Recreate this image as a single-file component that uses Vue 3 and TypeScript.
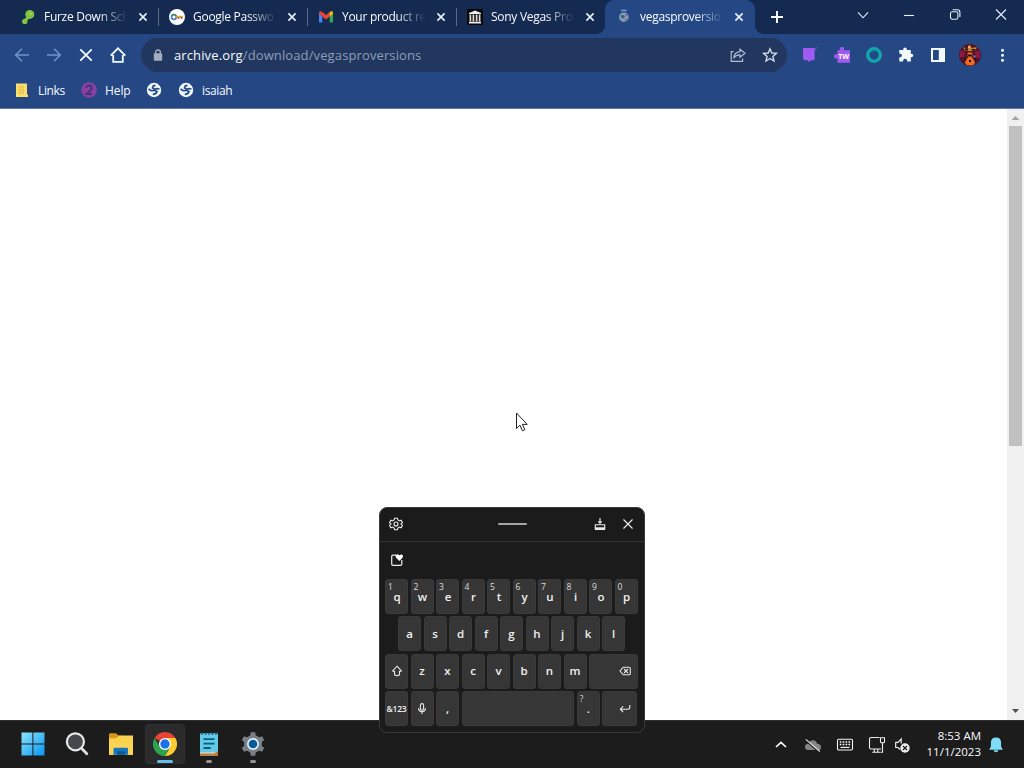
<script setup lang="ts">
interface Tab {
  icon: string
  title: string
  active?: boolean
}
interface Key {
  label?: string
  hint?: string
  kind?: string
}

const tabs: Tab[] = [
  { icon: 'leaf', title: 'Furze Down Sch' },
  { icon: 'key', title: 'Google Passwo' },
  { icon: 'mail', title: 'Your product re' },
  { icon: 'archive', title: 'Sony Vegas Pro' },
  { icon: 'globe', title: 'vegasproversio', active: true },
]

const letters = (s: string): Key[] => s.split('').map((label) => ({ label }))

const rows: Key[][] = [
  'qwertyuiop'.split('').map((label, i) => ({ label, hint: String((i + 1) % 10) })),
  letters('asdfghjkl'),
  [{ kind: 'shift' }, ...letters('zxcvbnm'), { kind: 'back' }],
  [
    { label: '&123', kind: 'sym' },
    { kind: 'mic' },
    { label: ',' },
    { kind: 'space' },
    { label: '.', hint: '?' },
    { kind: 'enter' },
  ],
]
</script>

<template>
  <div class="screen">
    <header class="tabstrip">
      <div v-for="tab in tabs" :key="tab.title" class="tab" :class="{ active: tab.active }">
        <span class="fav">
          <svg v-if="tab.icon === 'leaf'" viewBox="0 0 16 16">
            <circle cx="9.8" cy="5.4" r="4.5" fill="#82c341" />
            <circle cx="4.8" cy="12.4" r="2.7" fill="#82c341" />
            <path d="M9.5 7 L4.8 12" stroke="#82c341" stroke-width="3" />
            <circle cx="10.5" cy="5" r="1.2" fill="#a5d765" />
          </svg>
          <svg v-else-if="tab.icon === 'key'" viewBox="0 0 16 16">
            <circle cx="8" cy="8" r="8" fill="#fff" />
            <circle cx="4.9" cy="8" r="2.4" fill="none" stroke="#4b7fc9" stroke-width="1.6" />
            <path d="M2.8 6.8 A2.4 2.4 0 0 1 7 6.8" fill="none" stroke="#4d9561" stroke-width="1.6" />
            <path d="M7.3 7.8 H14" stroke="#d9a63a" stroke-width="2" />
            <path d="M9.5 8 V10 M12.5 8 V10" stroke="#b9683d" stroke-width="1.6" />
          </svg>
          <svg v-else-if="tab.icon === 'mail'" viewBox="0 0 16 16">
            <path d="M1 4 V13.5 H4.3 V7.5 L1 4Z" fill="#4285f4" />
            <path d="M15 4 V13.5 H11.7 V7.5 L15 4Z" fill="#34a853" />
            <path d="M1 4.5 V3.6 C1 2 2.8 1.8 3.8 2.7 L8 6 L12 2.8 V7.3 L8 10.4 L4.2 7.4Z" fill="#ea4335" />
            <path d="M11.7 3 C13 1.9 15 2 15 3.8 V5 L11.7 7.6Z" fill="#fbbc04" />
          </svg>
          <svg v-else-if="tab.icon === 'archive'" viewBox="0 0 16 16">
            <rect width="16" height="16" rx="1" fill="#080808" />
            <path d="M2 4 L8 1.5 L14 4 V5 H2Z M2 12.8 H14 V14.5 H2Z" fill="#eee" />
            <path d="M3.4 5.5 V12.5 M6.4 5.5 V12.5 M9.6 5.5 V12.5 M12.6 5.5 V12.5" stroke="#ddd" stroke-width="1.7" />
          </svg>
          <svg v-else viewBox="0 0 16 16">
            <path d="M5 1.5H10.5" fill="none" stroke="#6d9ae0" stroke-width="1.6" />
            <circle cx="7.8" cy="8.2" r="4.8" fill="#8999b0" />
            <path d="M4.5 6.5 L7.5 6 L9 8 L7 9.8 L5.3 8.5Z M8.7 11 L11 9.3 L10.2 11.8Z M9 4.8 L11.4 6.6 L10 7.2Z" fill="#3c5b8c" />
          </svg>
        </span>
        <span class="title">{{ tab.title }}</span>
        <svg class="close" viewBox="0 0 10 10"><path d="M1.4 1.4 8.6 8.6M8.6 1.4 1.4 8.6" /></svg>
      </div>
      <svg class="newtab" viewBox="0 0 14 14"><path d="M7 1V13M1 7H13" /></svg>
      <div class="caption">
        <svg viewBox="0 0 14 14"><path d="M2 4.4 7 9.8 12 4.4" /></svg>
        <svg viewBox="0 0 14 14"><path d="M2 7.5H12" /></svg>
        <svg viewBox="0 0 14 14"><rect x="2.5" y="3.8" width="7.4" height="7.4" rx="1.6" /><path d="M4.6 1.8H9.3Q11.9 1.8 11.9 4.4V8.9" /></svg>
        <svg viewBox="0 0 14 14"><path d="M2 1.5 12 11.5M12 1.5 2 11.5" /></svg>
      </div>
    </header>

    <section class="chrome">
      <div class="toolbar">
        <svg class="nav dim" viewBox="0 0 16 16"><path d="M15 8H2M8 1.7 1.7 8 8 14.3" /></svg>
        <svg class="nav dim" viewBox="0 0 16 16"><path d="M1 8H14M8 1.7 14.3 8 8 14.3" /></svg>
        <svg class="nav" viewBox="0 0 16 16"><path d="M2.3 2.3 13.7 13.7M13.7 2.3 2.3 13.7" /></svg>
        <svg class="nav" viewBox="0 0 16 16"><path d="M3.2 8V14.8H12.8V8M.7 8.7 8 1.3 15.3 8.7" /></svg>
        <div class="omnibox">
          <svg class="lock" viewBox="0 0 10 13"><rect x=".8" y="4.3" width="8.4" height="7.4" rx=".8" fill="#a4adbd" /><path d="M2.7 4.5V3.1Q2.7 1 5 1T7.3 3.1V4.5" fill="none" stroke="#a4adbd" stroke-width="1.4" /></svg>
          <span class="url"><b>archive.org</b>/download/vegasproversions</span>
          <svg class="share" viewBox="0 0 16 16"><path d="M3.6 4.6H1.2V14.3H12.6V11.6M10 2.2 15 6.2 10 10.2V7.9Q6 7.7 3.7 11.3 4.2 5.3 10 4.7Z" /></svg>
          <svg class="star" viewBox="0 0 16 16"><path d="M8 1.7 9.8 6 14.4 6.4 10.9 9.4 12 14 8 11.5 4 14 5.1 9.4 1.6 6.4 6.2 6Z" /></svg>
        </div>
        <div class="extensions">
          <svg viewBox="0 0 18 18"><path d="M2 3Q2 2 3 2H13.6V13.2Q13.6 14.2 12.6 14.2H9.8L8.2 15.9 6.6 14.2H4.4Q2 14.2 2 12Z" fill="#9d5bf2" /><path d="M13.2 2 17 1 13.8 5Z" fill="#7050b8" /></svg>
          <svg viewBox="0 0 18 18"><path d="M4.5 4.2H7.2Q5.7.9 9 .9T10.6 4.2H17V16.8H4.5V12.2Q1 13.5 1 10.3T4.5 8.8Z" fill="#a35af3" /><text x="5.2" y="12.8">TW</text></svg>
          <svg viewBox="0 0 18 18"><circle cx="9" cy="9" r="6.3" fill="none" stroke="#11a8ac" stroke-width="3.3" /><path d="M6.3 6.3 Q9.5 3.8 12.7 5.8" fill="none" stroke="#0a7f98" stroke-width="1.3" /></svg>
          <svg viewBox="0 0 18 18"><path d="M2.3 4H6.2Q5.9 1.5 8 1.5T9.9 4H13.8V7.7Q16.3 7.4 16.3 9.4T13.8 11.2V15.5H10.2Q10.2 12.8 8.1 12.8T6 15.5H2.3V11.6Q5 11.6 5 9.6T2.3 7.6Z" fill="#f4fbff" /></svg>
          <svg viewBox="0 0 18 18"><rect x="3" y="3" width="12" height="12" fill="none" stroke="#f4fbff" stroke-width="2" /><rect x="9.8" y="3" width="5.2" height="12" fill="#f4fbff" /></svg>
          <svg class="avatar" viewBox="0 0 22 22">
            <circle cx="11" cy="11" r="11" fill="#521426" />
            <path d="M1.5 6 L6 8 L5 13 L.5 13Z M16 8 L20.5 6 L21.5 14 L17 14Z" fill="#8b1845" />
            <path d="M4 3 L8 5 L10.5 .5 L13 4 L18 3 L16.5 6 L12 7 L6 7Z" fill="#c9832c" />
            <path d="M6 4.5H9V6.5H6ZM12 5H17L14 7Z" fill="#2a121d" />
            <path d="M9 8.5H13L14 11 12.5 13 16 17Q16 20 14 21.3H8Q5 19 6.5 16L9.5 13 8 11Z" fill="#ee6c21" />
            <path d="M8 10.5H14L12.5 12.5H9.5ZM5 15 8 14 6 18ZM14 14 17 15 16 18ZM10 16H12V18H10Z" fill="#26111a" />
            <circle cx="10" cy="3" r="1" fill="#f5cf72" /><circle cx="15.5" cy="12.5" r="1.2" fill="#7a5fc5" />
          </svg>
          <svg viewBox="0 0 18 18"><g fill="#f4fbff"><circle cx="9.5" cy="4.3" r="1.5" /><circle cx="9.5" cy="9.3" r="1.5" /><circle cx="9.5" cy="14.3" r="1.5" /></g></svg>
        </div>
      </div>
      <nav class="bookmarks">
        <div class="bm links"><svg viewBox="0 0 16 16"><path d="M2 1.5H13V12L14 13V15H2Z" fill="#fbdf6c" /><path d="M4 5H10M4 8H10M4 11H10M6 4V12M9 4V12" stroke="#ddb445" stroke-width=".7" /></svg>Links</div>
        <div class="bm help"><svg viewBox="0 0 16 16"><circle cx="8" cy="8" r="7.8" fill="#8a3fa5" /><path d="M5 5.8Q5.5 3.5 8 3.5T10.8 6Q10.8 7.5 5.5 12H11.2" fill="none" stroke="#413577" stroke-width="1.8" /></svg>Help</div>
        <div v-for="name in ['', 'isaiah']" :key="name" class="bm earth">
          <svg viewBox="0 0 16 16"><circle cx="8" cy="8" r="7.2" fill="#f5fbff" /><path d="M2.6 7Q5.5 9.5 7.5 8.4T6.5 6Q6.5 3.6 9.5 3.3M13.5 7Q10 6.3 9 7.3T11 9.5Q10.3 12.3 6.8 12.3" fill="none" stroke="#264a86" stroke-width="1.7" /></svg>{{ name }}
        </div>
      </nav>
    </section>

    <main class="page">
      <div class="scrollbar">
        <svg viewBox="0 0 17 17"><path d="M4.5 11 8.5 7 12.5 11Z" fill="#a3a3a3" /></svg>
        <div class="thumb"></div>
        <svg class="down" viewBox="0 0 17 17"><path d="M5 6 H12 L8.5 10Z" fill="#505050" /></svg>
      </div>
    </main>

    <footer class="taskbar">
      <div class="apps">
        <div class="app">
          <svg viewBox="0 0 26 26"><defs><linearGradient id="win" x1="0" y1="0" x2="1" y2="1"><stop stop-color="#8be4ff" /><stop offset="1" stop-color="#0795ef" /></linearGradient></defs><path d="M1.5 1.5H12.4V12.4H1.5ZM13.4 1.5H24.5V12.4H13.4ZM1.5 13.4H12.4V24.5H1.5ZM13.4 13.4H24.5V24.5H13.4Z" fill="url(#win)" /></svg>
        </div>
        <div class="app">
          <svg viewBox="0 0 26 26"><circle cx="11.4" cy="10.8" r="8.5" fill="#45474a" stroke="#e9e9e9" stroke-width="2.2" /><path d="M17.5 17.2 22.8 22.7" stroke="#dedede" stroke-width="2.8" stroke-linecap="round" /></svg>
        </div>
        <div class="app">
          <svg viewBox="0 0 26 26"><path d="M1 3.3Q1 2.2 2.2 2.2H8L10.8 4.7H14V10H1Z" fill="#d99716" /><path d="M1 7.3H8L11 4.5H25V23.8H1Z" fill="#fbd14f" /><path d="M1 12H25V23.8H1Z" fill="#fdd556" /><path d="M5.5 18Q5.5 16.8 6.8 16.8H18.8Q20 16.8 20 18V23.8H5.5Z" fill="#1578bf" /><path d="M9 20.2H17V23.8H9Z" fill="#105893" /></svg>
        </div>
        <div class="app selected">
          <svg viewBox="0 0 26 26"><path d="M13 13 2.6 7A12 12 0 0 1 23.4 7Z" fill="#e94335" /><path d="M13 7H23.4A12 12 0 0 1 13 25L18.2 16Z" fill="#ffcc2e" /><path d="M2.6 7 7.8 16 13 19 18.2 16 13 25A12 12 0 0 1 2.6 7Z" fill="#2da44e" /><circle cx="13" cy="13" r="6.1" fill="#fff" /><circle cx="13" cy="13" r="4.7" fill="#1a73e8" /></svg>
          <i class="run wide"></i>
        </div>
        <div class="app">
          <svg viewBox="0 0 26 26"><rect x="4" y="2.2" width="18" height="22" rx="1" fill="#62c9e8" /><path d="M4 21.5H22V24.5H4Z" fill="#eee4d8" /><path d="M4 22.6H18L22 20V24.5H4Z" fill="#c67729" /><path d="M7.5 8.2H18.5M7.5 12.7H18.5M7.5 17H14.7" stroke="#075c80" stroke-width="1.8" /><path d="M6 1.4V4M9.5 1.4V4M13 1.4V4M16.5 1.4V4M20 1.4V4" stroke="#165b72" stroke-width="1.2" /></svg>
          <i class="run"></i>
        </div>
        <div class="app">
          <svg viewBox="0 0 26 26"><g fill="#798087"><circle cx="13" cy="13" r="9" /><path id="tooth" d="M10.2 5 10.8 1.3H15.2L15.8 5V21L15.2 24.7H10.8L10.2 21Z" /><use href="#tooth" transform="rotate(60 13 13)" /><use href="#tooth" transform="rotate(120 13 13)" /></g><circle cx="13" cy="13" r="6" fill="#e2edf3" /><circle cx="13" cy="13" r="4.3" fill="#075b9b" /></svg>
          <i class="run"></i>
        </div>
      </div>
      <div class="tray">
        <svg class="chev" viewBox="0 0 18 18"><path d="M4 11 9 6.3 14 11" fill="none" stroke="#fff" stroke-width="1.6" /></svg>
        <svg class="cloud" viewBox="0 0 18 18"><path d="M4.5 14Q1 14 1 11T4.4 7.7Q5.5 4.2 9 4.2T13 7.8Q17 8.2 17 11.2T14 14Z" fill="#858585" /><path d="M1.8 4.5 14.8 15.9" stroke="#1c1c1c" stroke-width="1.6" /><path d="M1.8 3.3 15.8 15.5" stroke="#e5e5e5" stroke-width="1.1" /></svg>
        <svg class="kb" viewBox="0 0 18 18"><rect x="1.5" y="3.2" width="15" height="10.8" rx="1.2" fill="none" stroke="#f3f3f3" stroke-width="1.1" /><path d="M3.8 6H14.6M3.8 8.6H14.6" stroke="#fff" stroke-width="1.5" stroke-dasharray="1.6 1.3" /><path d="M4.5 11.4H13.5" stroke="#fff" stroke-width="1.1" /></svg>
        <svg class="net" viewBox="0 0 18 18"><path d="M11.5 1.5H3Q1.5 1.5 1.5 3V11.5Q1.5 13 3 13H13M6.3 13V16M9.8 13V16M4.3 16.3H12M12.5 1.7H16.5V5.7Q16.5 6.7 15.4 6.7H13.6Q12.5 6.7 12.5 5.7ZM14.5 6.7V16.3H12.3" fill="none" stroke="#eee" stroke-width="1.1" /></svg>
        <svg class="sound" viewBox="0 0 18 18"><path d="M6 13.5 4 11.5H1.7V6.3H4L7.2 3V7.5" fill="none" stroke="#eee" stroke-width="1.2" /><circle cx="11" cy="12" r="4.7" fill="#eee" /><path d="M9 10 13 14M13 10 9 14" stroke="#1c1c1c" stroke-width="1.2" /></svg>
        <div class="clock"><span>8:53 AM</span><span>11/1/2023</span></div>
        <svg class="bell" viewBox="0 0 18 18"><path d="M9 1.6Q3.9 1.6 3.9 7V10.5L2.2 13.7H15.8L14.1 10.5V7Q14.1 1.6 9 1.6ZM6.6 14.3Q7 16.2 9 16.2T11.4 14.3Z" fill="#7edcf8" /></svg>
      </div>
    </footer>

    <div class="keyboard">
      <div class="kbhead">
        <svg viewBox="0 0 14 14"><path d="M5.6 1.2H8.4L8.9 3 10.5 3.9 12.2 3.3 13.4 5.6 12 7 13.4 8.4 12.2 10.7 10.5 10.1 8.9 11 8.4 12.8H5.6L5.1 11 3.5 10.1 1.8 10.7.6 8.4 2 7 .6 5.6 1.8 3.3 3.5 3.9 5.1 3Z" /><circle cx="7" cy="7" r="2" /></svg>
        <i class="grip"></i>
        <svg class="dock" viewBox="0 0 14 14"><path d="M7 1V6M5.2 4.3 7 6.2 8.8 4.3M2.3 11V7.8H11.7V11" /><path d="M1.8 10.3H12.2V13H1.8Z" fill="#eee" stroke="none" /></svg>
        <svg class="kclose" viewBox="0 0 14 14"><path d="M2.5 2.5 11.5 11.5M11.5 2.5 2.5 11.5" /></svg>
      </div>
      <div class="suggest">
        <svg viewBox="0 0 14 14"><path d="M6 2.2H3Q1.7 2.2 1.7 3.5V11Q1.7 12.3 3 12.3H10.5Q11.8 12.3 11.8 11V7" fill="none" stroke="#eee" stroke-width="1.2" /><path d="M9.3 8 5.7 4.3Q5.3 1.3 7.7 1.2L9.3 2.2Q12.9.1 13 3.6Q13 5 9.3 8Z" fill="#fff" /></svg>
      </div>
      <div class="keys">
        <div v-for="(row, r) in rows" :key="r" class="row" :class="'row' + r">
          <div v-for="(k, i) in row" :key="i" class="key" :class="k.kind">
            <small v-if="k.hint">{{ k.hint }}</small>
            <span v-if="k.label">{{ k.label }}</span>
            <svg v-else-if="k.kind === 'shift'" viewBox="0 0 12 12"><path d="M6 1.2 10.2 5.6V6.3H8.5V9Q8.5 10.7 6 10.7T3.5 9V6.3H1.8V5.6Z" /></svg>
            <svg v-else-if="k.kind === 'back'" viewBox="0 0 12 12"><path d="M4.2 2.2H10Q11.3 2.2 11.3 3.5V8.5Q11.3 9.8 10 9.8H4.2L1 6ZM5 4 9 8M9 4 5 8" /></svg>
            <svg v-else-if="k.kind === 'mic'" viewBox="0 0 12 12"><rect x="4.4" y=".6" width="3.2" height="6.5" rx="1.6" /><path d="M2.5 5.1Q2.7 8.6 6 8.6T9.5 5.1M6 8.6V11" /></svg>
            <svg v-else-if="k.kind === 'enter'" viewBox="0 0 12 12"><path d="M10.8 2V4Q10.8 6.2 9 6.2H1.5M4.2 3.3 1.3 6.2 4.2 9.1" /></svg>
          </div>
        </div>
      </div>
    </div>

    <svg class="cursor" viewBox="0 0 14 20"><path d="M1.5 1V16.5L4.9 13.2 7.4 18.8 9.8 17.7 7.4 12.4H12.2Z" fill="#fff" stroke="#222" stroke-width="1" /></svg>
  </div>
</template>

<style>
body { margin: 0; overflow: hidden; }
</style>

<style scoped>
* { box-sizing: border-box; }
svg { display: block; flex: none; overflow: visible; }
.screen { position: relative; display: flex; flex-direction: column; width: 1024px; height: 768px; overflow: hidden; background: #fff; font-family: "Open Sans", "Noto Sans", sans-serif; font-size: 12px; color: #f7faff; }

.tabstrip { display: flex; height: 34px; padding-left: 9px; background: #142a50; }
.tab { position: relative; display: flex; align-items: center; width: 149px; height: 34px; padding: 0 10px 0 11px; }
.tab:not(.active)::after { content: ""; position: absolute; right: -1px; top: 8px; width: 1px; height: 18px; background: #596883; }
.tab:nth-child(4)::after { display: none; }
.tab:nth-child(4)::before { content: ""; position: absolute; left: 0; top: 8px; width: 1px; height: 18px; background: #596883; }
.tab:nth-child(3)::after { display: none; }
.tab.active { background: #254885; border-radius: 9px 9px 0 0; width: 150px; padding-left: 11px; }
.tab.active::before, .tab.active::after { content: ""; position: absolute; bottom: 0; width: 8px; height: 8px; }
.tab.active::before { left: -8px; background: radial-gradient(circle at 0 0, transparent 7.5px, #254885 8px); }
.tab.active::after { right: -8px; background: radial-gradient(circle at 100% 0, transparent 7.5px, #254885 8px); }
.fav { width: 16px; height: 16px; margin-right: 8px; }
.fav svg { width: 16px; height: 16px; }
.title { width: 88px; white-space: nowrap; font-size: 12px; letter-spacing: -.28px; line-height: 18px; -webkit-mask-image: linear-gradient(90deg, #000 62%, transparent 95%); mask-image: linear-gradient(90deg, #000 62%, transparent 95%); }
.close { width: 10px; height: 10px; margin-left: 6px; }
.close path { fill: none; stroke: #eaf3ff; stroke-width: 1.6; }
.newtab { width: 14px; height: 14px; margin: 10px 0 0 15px; }
.newtab path { stroke: #fff; stroke-width: 1.9; }
.caption { display: flex; margin-left: auto; padding-right: 16px; gap: 32px; height: 29px; align-items: center; }
.caption svg { width: 14px; height: 14px; fill: none; stroke: #e9eef8; stroke-width: 1.1; }

.chrome { height: 75px; background: #254885; border-bottom: 1px solid #617aa5; }
.toolbar { display: flex; align-items: center; height: 42px; padding: 0 13px 0 14px; }
.nav { width: 16px; height: 16px; margin-right: 16px; fill: none; stroke: #f4fbff; stroke-width: 1.8; }
.nav.dim { stroke: #7192c7; stroke-width: 1.6; }
.omnibox { display: flex; align-items: center; width: 646px; height: 34px; margin-left: -1px; padding: 0 9px 0 12px; border-radius: 17px; background: #21375f; }
.lock { width: 10px; height: 13px; margin-right: 11px; }
.url { font-size: 13px; letter-spacing: .12px; color: #8e9db8; line-height: 20px; white-space: nowrap; }
.url b { color: #f7faff; font-weight: 400; }
.share { width: 16px; height: 16px; margin: 0 16px 0 auto; fill: none; stroke: #b2bfd4; stroke-width: 1.2; }
.star { width: 16px; height: 16px; fill: none; stroke: #ced8e8; stroke-width: 1.4; }
.extensions { display: flex; align-items: center; gap: 14px; margin-left: 14px; }
.extensions svg { width: 18px; height: 18px; }
.extensions text { font: 700 7px "Open Sans", sans-serif; fill: #fff; }
.extensions .avatar { width: 22px; height: 22px; margin: 0 -2px; }
.bookmarks { display: flex; height: 28px; padding-left: 14px; align-items: center; }
.bm { display: flex; align-items: center; gap: 8px; font-size: 12px; letter-spacing: -.35px; white-space: nowrap; }
.bm svg { width: 16px; height: 16px; }
.links { width: 67px; }
.help { width: 65px; letter-spacing: -.1px; }
.earth { width: 32px; }

.page { display: flex; justify-content: flex-end; height: 611px; background: #fff; }
.scrollbar { display: flex; flex-direction: column; align-items: center; width: 17px; background: #f0f0f0; }
.scrollbar svg { width: 17px; height: 17px; }
.thumb { width: 13px; height: 320px; background: #c0c0c0; }
.down { margin-top: auto; }

.taskbar { display: flex; justify-content: space-between; height: 48px; background: #1c1c1c; border-top: 1px solid #303030; }
.apps { display: flex; gap: 4px; padding: 3px 0 0 13px; }
.app { display: flex; flex-direction: column; align-items: center; width: 40px; height: 40px; padding-top: 7px; border-radius: 4px; }
.app svg { width: 26px; height: 26px; }
.selected { background: #2b2b2b; box-shadow: inset 0 0 0 1px #303030; }
.run { width: 6px; height: 3px; margin-top: 3px; border-radius: 2px; background: #949494; }
.run.wide { width: 16px; background: #67bcf0; }
.tray { display: flex; align-items: center; padding-right: 19px; }
.tray svg { width: 18px; height: 18px; }
.chev { margin-right: 14px; }
.cloud { margin-right: 14px; }
.kb { margin-right: 14px; }
.net { margin-right: 8px; }
.sound { margin-right: 10px; }
.clock { display: flex; flex-direction: column; width: 59px; text-align: right; align-items: flex-end; font-size: 11.5px; line-height: 16px; letter-spacing: 0; margin: -2px 6px 0 0; }

.keyboard { position: absolute; left: 379px; top: 507px; width: 266px; height: 226px; border: 1px solid #3a3a3a; border-radius: 8px; background: #1b1b1b; }
.kbhead { display: flex; align-items: center; height: 34px; padding: 0 9px 2px 9px; border-bottom: 1px solid #303030; }
.kbhead svg { width: 14px; height: 14px; fill: none; stroke: #eee; stroke-width: 1.1; }
.grip { width: 29px; height: 2px; margin: 0 0 0 95px; border-radius: 1px; background: #a6a6a6; }
.dock { margin-left: auto; margin-right: 14px; }
.suggest { height: 37px; padding: 11px 0 0 10px; }
.suggest svg { width: 14px; height: 14px; }
.keys { display: flex; flex-direction: column; gap: 2.4px; padding: 0 5px; }
.row { display: flex; gap: 2.5px; height: 35px; }
.row1 { padding-left: 13px; }
.key { position: relative; display: flex; align-items: center; justify-content: center; width: 23px; flex: none; border-radius: 3px; background: #363636; border: 1px solid #3a3a3a; color: #f1f1f1; font-size: 11.5px; font-weight: 600; }
.key span { line-height: 16px; }
.row0 .key span { padding-left: 1px; }
.key small { position: absolute; left: 2px; top: 2px; font-size: 8.5px; line-height: 10px; color: #dedede; font-weight: 500; }
.key svg { width: 12px; height: 12px; fill: none; stroke: #e9e9e9; stroke-width: 1.1; }
.key.sym { font-size: 8.5px; letter-spacing: -.25px; }
.key.back { width: 48.5px; justify-content: flex-end; padding-right: 6px; }
.key.space { width: 112.75px; }
.key.enter { width: 35px; justify-content: flex-end; padding-right: 5px; }

.cursor { position: absolute; left: 515px; top: 412px; width: 14px; height: 20px; }
</style>
